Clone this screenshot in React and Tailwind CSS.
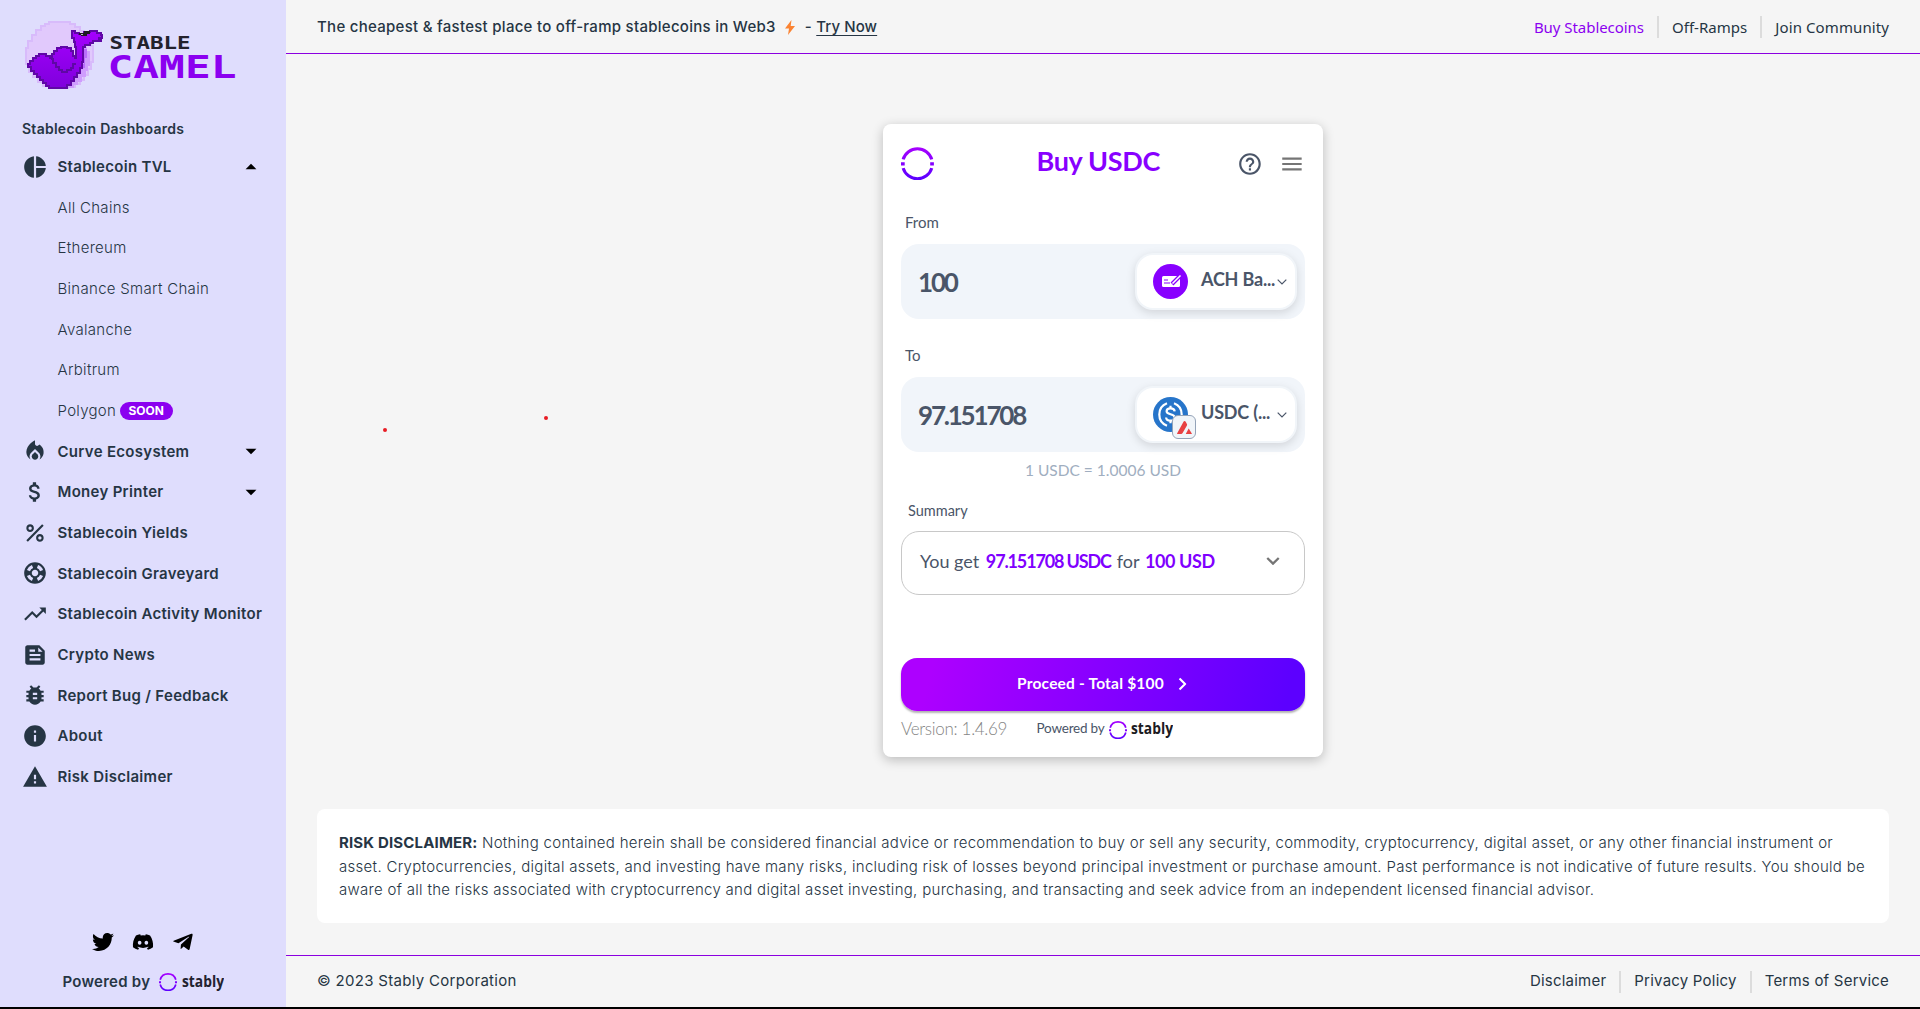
import React from "react";
import {
  MdPieChart,
  MdLocalFireDepartment,
  MdAttachMoney,
  MdPercent,
  MdSupport,
  MdTrendingUp,
  MdFeed,
  MdBugReport,
  MdInfo,
  MdWarning,
  MdArrowDropDown,
  MdArrowDropUp,
  MdHelpOutline,
  MdMenu,
} from "react-icons/md";
import { FaTwitter, FaDiscord, FaTelegramPlane } from "react-icons/fa";

const NAV = [
  {
    icon: MdPieChart,
    label: "Stablecoin TVL",
    open: true,
    children: ["All Chains", "Ethereum", "Binance Smart Chain", "Avalanche", "Arbitrum", "Polygon"],
  },
  { icon: MdLocalFireDepartment, label: "Curve Ecosystem", open: false },
  { icon: MdAttachMoney, label: "Money Printer", open: false },
  { icon: MdPercent, label: "Stablecoin Yields" },
  { icon: MdSupport, label: "Stablecoin Graveyard" },
  { icon: MdTrendingUp, label: "Stablecoin Activity Monitor" },
  { icon: MdFeed, label: "Crypto News" },
  { icon: MdBugReport, label: "Report Bug / Feedback" },
  { icon: MdInfo, label: "About" },
  { icon: MdWarning, label: "Risk Disclaimer" },
];

function CamelLogo() {
  return (
    <svg width="216" height="76" viewBox="22 17 216 76" className="block">
      <defs>
        <linearGradient id="camel" x1="0" y1="0" x2="0" y2="1">
          <stop offset="0" stopColor="#a500ff" />
          <stop offset="1" stopColor="#7f00dc" />
        </linearGradient>
      </defs>
      <g shapeRendering="crispEdges">
        <path d="M49 22H70V24H75V27H80V31H84V35H88V40H91V46H93V62H91V69H88V75H84V80H80V84H75V87H68V88H49V86H43V82H38V77H33V72H29V64H26V48H28V41H32V35H36V30H41V26H45V24H49Z" fill="#e1c9fc" stroke="#d8bbfb" strokeWidth="1.5" />
        <path d="M84 47H87V51H90V66H88V71H86V77H82V82H78V85H74V88H66L80 70Z" fill="#cf9dfd" />
        <path d="M84 49H87V58H85V68H81V64H84Z" fill="#b96dfb" />
        <path
          d="M28 64H30V61H33V58H36V56H39V54H46V56H50V58H52V54H54V51H57V48H61V47H67V48H71V51H73V56H75V58H76V47H75V42H74V38H72V31H75V33H79V34H84V32H90V31H97V33H101V35H102V38H99V40H101V41H93V43H90V45H85V47H83V62H82V68H80V73H77V77H74V81H71V85H67V88H49V86H46V83H43V80H40V77H37V74H34V71H31V67H28Z"
          fill="url(#camel)"
          stroke="#5f07a6"
          strokeWidth="1.1"
        />
        <path d="M51 59H53V63H56V67H59V70H62V72H67V70H71V68H73V64H76" fill="none" stroke="#5f07a6" strokeWidth="1.1" />
        <path d="M79 33H84V31H90V34H87V36H81V35H79Z" fill="#1d1a24" />
        <path d="M81 34H83V35H81Z" fill="#b9b4c8" />
      </g>
      <text x="109.500" y="49" textLength="81" lengthAdjust="spacingAndGlyphs" fontFamily="DejaVu Sans Mono" fontWeight="700" fontSize="17.500" fill="#23222c">
        STABLE
      </text>
      <text x="107.500" y="78" textLength="129" lengthAdjust="spacingAndGlyphs" fontFamily="DejaVu Sans Mono" fontWeight="700" fontSize="32.500" fill="#8b00f0">
        CAMEL
      </text>
    </svg>
  );
}

function Ring({ className }) {
  return (
    <svg viewBox="0 0 32 32" className={className}>
      <defs>
        <linearGradient id="ring" x1="0" y1="0" x2="0" y2="32" gradientUnits="userSpaceOnUse">
          <stop offset="0" stopColor="#a800ff" />
          <stop offset="1" stopColor="#5a00ff" />
        </linearGradient>
      </defs>
      <g fill="none" stroke="url(#ring)" strokeWidth="3">
        <path d="M2.100 12A14.500 14.500 0 0 1 29.900 12" />
        <path d="M2.100 20.500A14.500 14.500 0 0 0 29.900 20.500" />
      </g>
      <path d="M0 14.700H3.600V18H0ZM28.400 14.700H32V18H28.400Z" fill="#8400ff" />
    </svg>
  );
}

function StablyWord({ className }) {
  return (
    <svg viewBox="0 0 42 24" className={className}>
      <text x="0" y="16.500" textLength="42" lengthAdjust="spacingAndGlyphs" fontFamily="Open Sans" fontWeight="700" fontSize="16" fill="currentColor">
        stably
      </text>
    </svg>
  );
}

function Chevron({ className, width }) {
  return (
    <svg viewBox="0 0 10 6" className={className} fill="none" stroke="currentColor" strokeWidth={width}>
      <path d="M0.700 0.700L5 5L9.300 0.700" />
    </svg>
  );
}

function Sidebar() {
  return (
    <aside className="flex h-full w-[286px] shrink-0 flex-col bg-[#dfddfd] text-[#263544]">
      <div className="pt-[17px] pl-[22px]">
        <CamelLogo />
      </div>
      <h2 className="mt-[25px] pl-[22px] text-sm leading-[22px] font-semibold tracking-[0.26px]">Stablecoin Dashboards</h2>
      <nav className="mt-[6.500px] flex flex-col text-[15px] tracking-[0.3px]">
        {NAV.map((item) => (
          <div key={item.label}>
            <div className="flex h-[40.670px] items-center pr-[22px] pl-[22px] whitespace-nowrap">
              <item.icon className="size-[26px] shrink-0" />
              <span className="ml-[9.500px] pt-px font-semibold">{item.label}</span>
              {item.open === true && <MdArrowDropUp className="ml-auto size-[26px] text-black" />}
              {item.open === false && <MdArrowDropDown className="ml-auto size-[26px] text-black" />}
            </div>
            {item.children?.map((child) => (
              <div key={child} className="flex h-[40.670px] items-center pt-px pl-[57.500px] font-light">
                {child}
                {child === "Polygon" && (
                  <span className="ml-[3.500px] flex h-[18px] w-[53px] items-center justify-center rounded-full bg-[#8b00f0] text-xs font-bold tracking-normal text-white">SOON</span>
                )}
              </div>
            ))}
          </div>
        ))}
      </nav>
      <div className="mt-auto flex items-center justify-center gap-[18px] text-black">
        <FaTwitter className="size-[22px]" />
        <FaDiscord className="size-[22px]" />
        <FaTelegramPlane className="size-[22px]" />
      </div>
      <div className="mt-[17px] mb-[13px] flex items-center pl-[62.500px]">
        <span className="text-[15px] leading-[24px] font-semibold tracking-[0.25px]">Powered by</span>
        <Ring className="ml-[9px] size-[18px]" />
        <StablyWord className="ml-[5px] h-6 w-[42px] text-[#23222f]" />
      </div>
    </aside>
  );
}

const Divider = () => <span className="mx-[13px] h-[22px] w-0.5 bg-[#dcdcdc]" />;

function AmountField({ value, token, icon }) {
  return (
    <div className="flex h-[75px] items-center justify-between rounded-[18px] bg-[#f1f5fa] pr-2 pl-[17px]">
      <span className="text-[26px] leading-none font-bold tracking-[-2.200px]">{value}</span>
      <div className="flex h-[57px] w-[162px] items-center rounded-[18px] border-2 border-[#f1f5f9] bg-white pl-4 shadow-[0_3px_10px_rgba(0,0,0,0.13)]">
        {icon}
        <span className="-mt-[5px] ml-[13px] w-[76px] text-lg font-bold tracking-[-0.200px] whitespace-nowrap">{token}</span>
        <Chevron className="h-[6px] w-[10px]" width={1.2} />
      </div>
    </div>
  );
}

const achIcon = (
  <svg viewBox="0 0 35 35" className="size-[35px] shrink-0">
    <circle cx="17.500" cy="17.500" r="17.500" fill="#8800ff" />
    <rect x="9" y="12" width="18" height="11" rx="1.500" fill="#fff" />
    <path d="M11 16H15M11 19H17" stroke="#8800ff" strokeWidth="1" />
    <path d="M19 20L28 11" stroke="#8800ff" strokeWidth="4" />
    <path d="M19.500 19.500L27.500 11.500" stroke="#fff" strokeWidth="1.600" />
  </svg>
);

const usdcIcon = (
  <span className="relative size-[35px] shrink-0">
    <svg viewBox="0 0 35 35" className="size-[35px]">
      <circle cx="17.500" cy="17.500" r="17.500" fill="#2775ca" />
      <g fill="none" stroke="#fff" strokeWidth="2.200">
        <path d="M14 6.300A12 12 0 0 0 14 28.700" />
        <path d="M21 6.300A12 12 0 0 1 21 28.700" />
        <path d="M21.700 14.300C21.500 12.300 20 11.400 17.500 11.400S13.600 12.600 13.600 14.300C13.600 18.300 21.800 16.200 21.800 20.700C21.800 22.600 20 23.700 17.500 23.700S13.200 22.700 13.100 20.500" />
        <path d="M17.500 8.800V11.500M17.500 23.500V26.200" />
      </g>
    </svg>
    <span className="absolute top-[18px] left-[19px] flex size-6 items-center justify-center rounded-md border border-[#94a3b8] bg-[#f1f5f9]">
      <svg viewBox="0 0 15 13" className="h-[13px] w-[15px]" fill="#e84142">
        <path d="M7.500 0Q8.300 0 8.700 0.800L9.900 3Q10.300 3.800 9.800 4.700L5.600 12.100Q5.100 13 4.200 13H0.600Q-0.200 13 0.200 12.200L6.500 0.800Q6.900 0 7.500 0Z" />
        <path d="M11.700 7.500L14.800 12.500Q15 13 14.500 13H9.200Q8.700 13 9 12.500Z" />
      </svg>
    </span>
  </span>
);

function Widget() {
  return (
    <section className="flex h-[633px] w-[440px] flex-col rounded-lg bg-white px-[18px] font-['Lato',sans-serif] text-[#4a5568] shadow-[0_3px_12px_rgba(0,0,0,0.24)]">
      <div className="flex h-[77px] items-center pt-0.5">
        <Ring className="size-[33px]" />
        <h1 className="-mt-[5px] ml-[102.500px] w-[201.500px] text-[27px] font-bold tracking-[-0.300px] text-[#8800ff]">Buy USDC</h1>
        <MdHelpOutline className="size-[26px]" />
        <MdMenu className="ml-4 size-[26px] text-[#757575]" />
      </div>
      <div className="flex h-[43px] items-center pb-px pl-1 text-[15px]">From</div>
      <AmountField value="100" token="ACH Ba..." icon={achIcon} />
      <div className="flex h-[58px] items-center pt-[15px] pl-1 text-[15px]">To</div>
      <AmountField value="97.151708" token="USDC (..." icon={usdcIcon} />
      <div className="flex h-9 items-center justify-center pt-0.5 text-[15.500px] text-[#a0aec0]">1 USDC = 1.0006 USD</div>
      <div className="flex h-[43px] items-center pt-0.5 pl-[7px] text-[14.500px]">Summary</div>
      <div className="flex h-16 items-center justify-between rounded-[18px] border border-[#c8c8c8] pr-6 pb-1 pl-[18px]">
        <p className="text-lg whitespace-pre">
          You get <b className="ml-0.5 tracking-[-1.150px] text-[#8000ff]">97.151708 USDC</b> <span className="ml-[1.500px]">for</span> <b className="ml-px tracking-[-0.400px] text-[#8000ff]">100 USD</b>
        </p>
        <Chevron className="h-2 w-[14px] text-[#757575]" width={1.7} />
      </div>
      <button className="mt-[63px] flex h-[53px] items-center justify-center rounded-2xl bg-[linear-gradient(105deg,#ad00ff_8%,#5c00ff_95%)] pb-0.5 text-[15.500px] font-bold tracking-[0.2px] text-white shadow-[0_2px_2px_rgba(0,0,0,0.3)]">
        Proceed - Total $100
        <Chevron className="mt-px ml-3 h-[8px] w-[13px] -rotate-90" width={1.6} />
      </button>
      <div className="flex h-[35px] items-center whitespace-nowrap">
        <span className="w-[135.500px] pt-px text-[17px] font-light tracking-[-0.300px] text-[#858585]">Version: 1.4.69</span>
        <span className="w-[72.500px] text-[13.500px] tracking-[-0.200px]">Powered by</span>
        <Ring className="mt-[3px] size-[18px]" />
        <StablyWord className="ml-1 h-6 w-[42px] text-[#1c1b22]" />
      </div>
    </section>
  );
}

export default function App() {
  return (
    <div className="flex h-[1009px] w-[1920px] overflow-hidden border-b-2 border-black bg-[#f5f5f5] font-['Inter',sans-serif] text-[#263544]">
      <Sidebar />
      <div className="relative flex min-w-0 flex-1 flex-col">
        <header className="flex h-[54px] items-center justify-between border-b border-[#8b00e0] px-[31px]">
          <div className="flex items-center pt-px text-[15px] font-medium tracking-[0.28px] whitespace-pre">
            The cheapest &amp; fastest place to off-ramp stablecoins in Web3
            <svg viewBox="0 0 10 15" className="mr-[10px] ml-[9px] h-[15px] w-[10px]" fill="#fb8332">
              <path d="M6.500 0L0 8.500H4L3 15L10 6H5.700Z" />
            </svg>
            - <span className="tracking-[0.1px] underline underline-offset-[3px]">Try Now</span>
          </div>
          <div className="flex items-center pt-px font-['Noto_Sans',sans-serif] text-[15px]">
            <span className="tracking-[-0.050px] text-[#8b00f0]">Buy Stablecoins</span>
            <Divider />
            <span className="tracking-[0.03px]">Off-Ramps</span>
            <Divider />
            <span className="tracking-[0.1px]">Join Community</span>
          </div>
        </header>
        <main className="flex flex-1 flex-col items-center px-[31px] pt-[70px]">
          <Widget />
          <section className="mt-[52px] h-[114px] w-full rounded-lg bg-white px-[22px] pt-[22px] text-[15px] leading-[23.700px] font-light tracking-[0.3px]">
            <p>
              <b className="font-bold tracking-[0.15px]">RISK DISCLAIMER:</b> Nothing contained herein shall be considered financial advice or recommendation to buy or sell any security, commodity, cryptocurrency, digital asset, or any other financial instrument or asset. Cryptocurrencies, digital assets, and investing have many risks, including risk of losses beyond principal investment or purchase amount. Past performance is not indicative of future results. You should be aware of all the risks associated with cryptocurrency and digital asset investing, purchasing, and transacting and seek advice from an independent licensed financial advisor.
            </p>
          </section>
        </main>
        <footer className="flex h-[52px] items-center justify-between border-t border-[#8b00e0] px-[31px] text-[15px] tracking-[0.3px]">
          <span>© 2023 Stably Corporation</span>
          <div className="flex items-center tracking-[0.22px]">
            <span>Disclaimer</span>
            <Divider />
            <span>Privacy Policy</span>
            <Divider />
            <span>Terms of Service</span>
          </div>
        </footer>
        <span className="absolute top-[428px] left-[97px] size-1 rounded-full bg-[#e81c24]" />
        <span className="absolute top-[416px] left-[258px] size-1 rounded-full bg-[#e81c24]" />
      </div>
    </div>
  );
}
